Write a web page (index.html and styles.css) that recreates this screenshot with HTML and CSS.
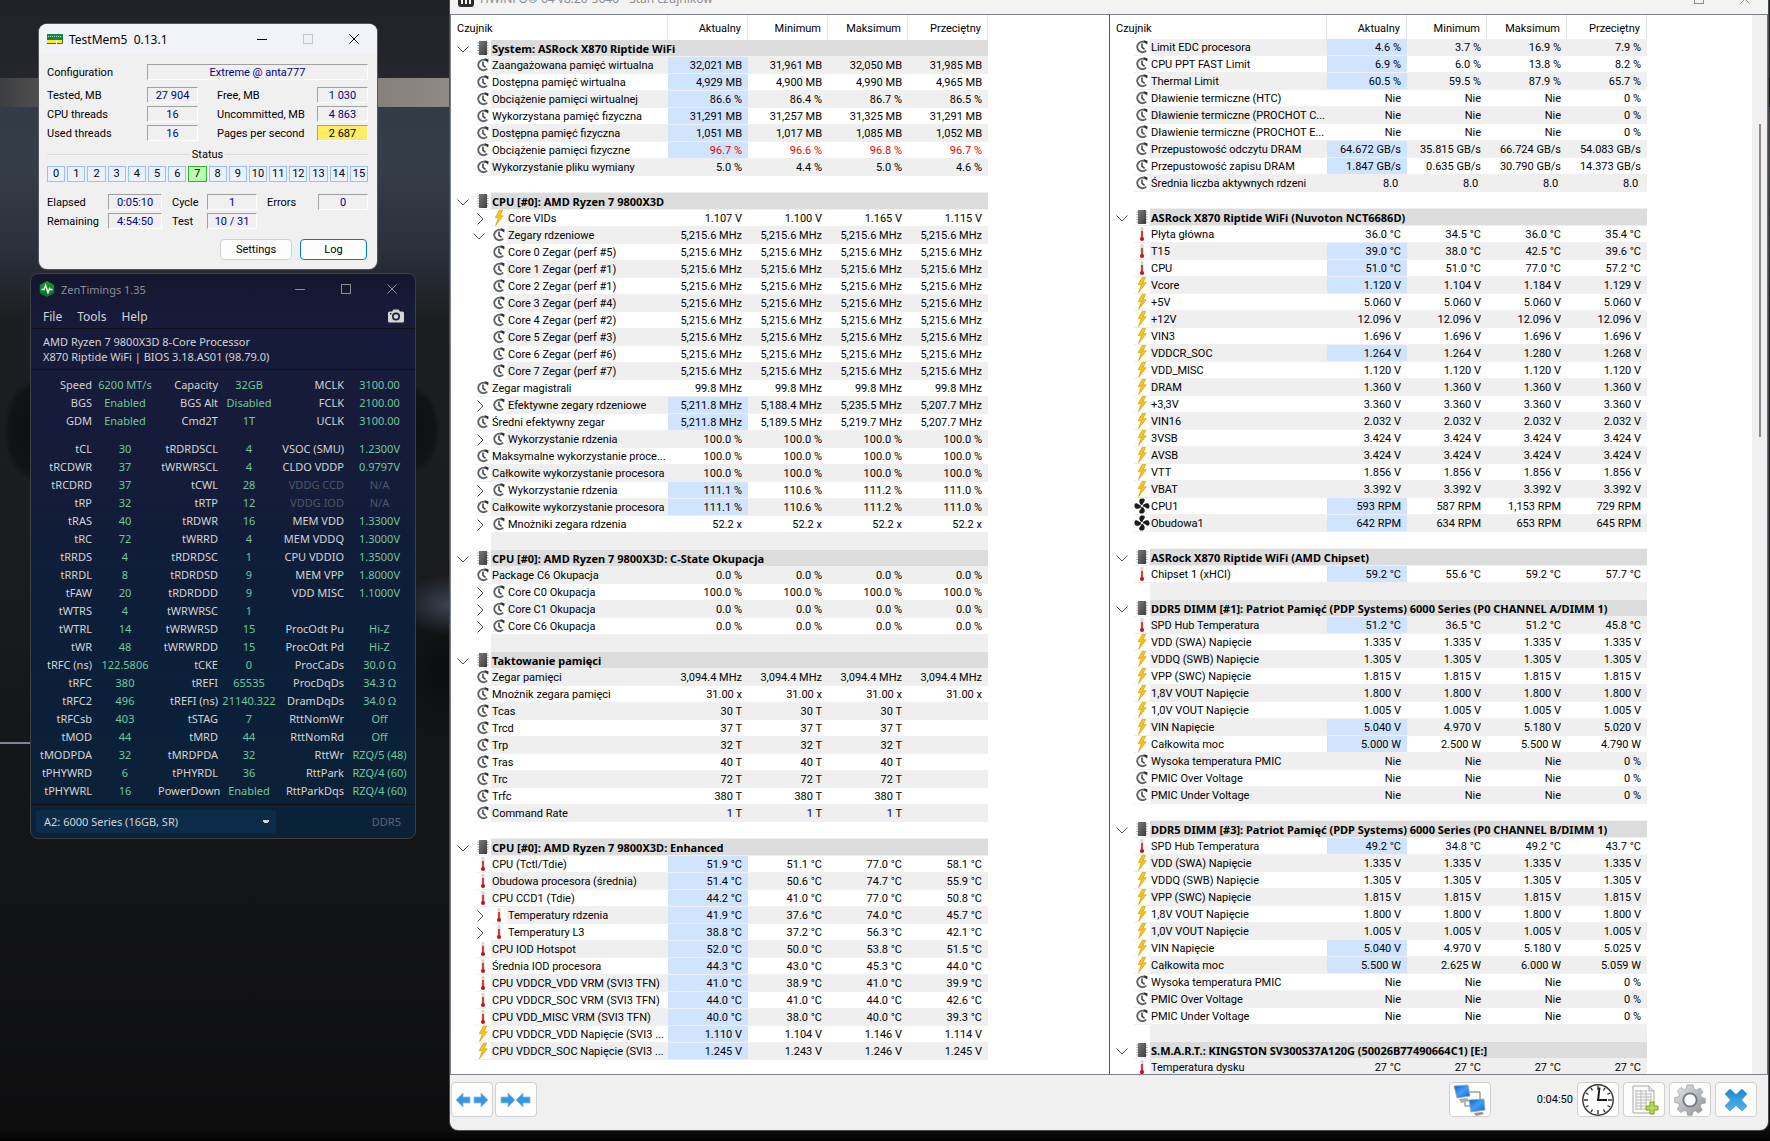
FILE: index.html
```html
<!DOCTYPE html>
<html lang="pl">
<head>
    <meta charset="UTF-8">
    <meta name="viewport" content="width=device-width, initial-scale=1.0">
    <title>Stan czujników</title>
    <link rel="stylesheet" href="styles.css">
</head>
<body>
    <!-- Icon sprite -->
    <svg class="sprite" width="0" height="0" aria-hidden="true">
        <defs>
            <linearGradient id="chip-fill" x1="0" y1="0" x2="1" y2="1">
                <stop offset="0" stop-color="#7a7a7a"/>
                <stop offset="1" stop-color="#3c3c3c"/>
            </linearGradient>
            <linearGradient id="blue-fill" x1="0" y1="0" x2="0" y2="1">
                <stop offset="0" stop-color="#1c86d1"/>
                <stop offset="1" stop-color="#56b4ee"/>
            </linearGradient>
            <linearGradient id="screen-fill" x1="0" y1="0" x2="1" y2="1">
                <stop offset="0" stop-color="#0b5fc4"/>
                <stop offset="0.5" stop-color="#3fa0f5"/>
                <stop offset="1" stop-color="#0d62c9"/>
            </linearGradient>
            <linearGradient id="gear-fill" x1="0" y1="0" x2="1" y2="1">
                <stop offset="0" stop-color="#e4e6e8"/>
                <stop offset="1" stop-color="#8f9396"/>
            </linearGradient>
            <linearGradient id="zen-fill" x1="0" y1="0" x2="0" y2="1">
                <stop offset="0" stop-color="#1f9a2c"/>
                <stop offset="1" stop-color="#0d6a35"/>
            </linearGradient>
        </defs>
        <symbol id="icon-clock" viewBox="0 0 16 16">
            <path d="M11 3.4A5.2 5.2 0 1 0 12.2 11.6" fill="none" stroke="#5f6468" stroke-width="2"/>
            <path d="M9.4 1L13.6 2.4L13.2 5.6L11 4z" fill="#2c2f31"/>
            <path d="M8 4.6V8.4L10.6 10.4" fill="none" stroke="#3c4043" stroke-width="1.5"/>
        </symbol>
        <symbol id="icon-chip" viewBox="0 0 16 16">
            <path d="M2.5 3H13.5M2.5 5.5H13.5M2.5 8H13.5M2.5 10.5H13.5M2.5 13H13.5" stroke="#9a9a9a" stroke-width="1.2"/>
            <rect x="4" y="1" width="8" height="14" fill="url(#chip-fill)"/>
        </symbol>
        <symbol id="icon-bolt" viewBox="0 0 16 16">
            <path d="M8.2 0.5L4.2 7.6H7.4L4.6 15.5L12.2 5.8H8.8L11.6 0.5z" fill="#f5c518" stroke="#d99a08" stroke-width="0.7"/>
        </symbol>
        <symbol id="icon-temp" viewBox="0 0 16 16">
            <rect x="6.5" y="1" width="3" height="12" rx="1" fill="#d6d6d6"/>
            <rect x="7.2" y="5" width="1.6" height="8" fill="#d01a1a"/>
            <circle cx="8" cy="13" r="2.1" fill="#c81414"/>
        </symbol>
        <symbol id="icon-fan" viewBox="0 0 16 16">
            <g fill="#1c1c1c">
                <path d="M7.6 7.6C6 6 4.6 4 5.6 1.8C6.6 0 10.6 0 10.8 2C11 4 8.6 4.6 8.6 7.4z"/>
                <path d="M8.4 7.6C10 6 12 4.6 14.2 5.6C16 6.6 16 10.6 14 10.8C12 11 11.4 8.6 8.6 8.6z"/>
                <path d="M8.4 8.4C10 10 11.4 12 10.4 14.2C9.4 16 5.4 16 5.2 14C5 12 7.4 11.4 7.4 8.6z"/>
                <path d="M7.6 8.4C6 10 4 11.4 1.8 10.4C0 9.4 0 5.4 2 5.2C4 5 4.6 7.4 7.4 7.4z"/>
            </g>
            <circle cx="8" cy="8" r="1.2" fill="#f0f0f0"/>
        </symbol>
        <symbol id="icon-down" viewBox="0 0 14 14">
            <path d="M1.5 4.5L7 10L12.5 4.5" fill="none" stroke="#4d4d4d"/>
        </symbol>
        <symbol id="icon-right" viewBox="0 0 14 14">
            <path d="M5.500 1.500L11 7L5.500 12.500" fill="none" stroke="#4d4d4d"/>
        </symbol>
        <symbol id="icon-min" viewBox="0 0 10 10">
            <path d="M0 5.5H10" stroke="currentColor"/>
        </symbol>
        <symbol id="icon-max" viewBox="0 0 10 10">
            <rect x="0.5" y="0.5" width="9" height="9" fill="none" stroke="currentColor"/>
        </symbol>
        <symbol id="icon-close" viewBox="0 0 10 10">
            <path d="M0.3 0.3L9.7 9.7M9.7 0.3L0.3 9.7" stroke="currentColor"/>
        </symbol>
    </svg>

    <!-- Memory test window -->
    <section class="window testmem" aria-label="TestMem5">
        <header class="titlebar testmem-title">
            <svg class="title-icon" width="16" height="10" viewBox="0 0 16 10">
                <rect width="16" height="6" fill="#0d8a4a"/>
                <path d="M1 2.5H15" stroke="#bfe3cf" stroke-dasharray="1 1"/>
                <path d="M0 6H9V9H0zM10 6H15V9H10z" fill="#f7ee1c"/>
                <path d="M15.5 6V9.5H10M0 9.5H9" stroke="#5c5c20" fill="none"/>
            </svg>
            <h1 class="title-text">TestMem5&nbsp; 0.13.1</h1>
            <div class="window-controls">
                <button class="control" aria-label="Minimize"><svg width="10" height="10"><use href="#icon-min"/></svg></button>
                <button class="control" aria-label="Maximize" disabled><svg width="10" height="10"><use href="#icon-max"/></svg></button>
                <button class="control" aria-label="Close"><svg width="10" height="10"><use href="#icon-close"/></svg></button>
            </div>
        </header>
        <div class="testmem-body">
            <div class="config-row">
                <label for="config">Configuration</label>
                <output class="field" id="config">Extreme @ anta777</output>
            </div>
            <div class="info-grid">
                <label for="tested">Tested, MB</label>
                <output class="field" id="tested">27 904</output>
                <label for="free" class="second">Free, MB</label>
                <output class="field" id="free">1 030</output>
                <label for="cpu-threads">CPU threads</label>
                <output class="field" id="cpu-threads">16</output>
                <label for="uncommitted" class="second">Uncommitted, MB</label>
                <output class="field" id="uncommitted">4 863</output>
                <label for="used-threads">Used threads</label>
                <output class="field" id="used-threads">16</output>
                <label for="pages" class="second">Pages per second</label>
                <output class="field field-warn" id="pages">2 687</output>
            </div>
            <h2 class="status-title">Status</h2>
            <ol class="threads">
                <li>0</li><li>1</li><li>2</li><li>3</li><li>4</li><li>5</li><li>6</li><li class="active">7</li>
                <li>8</li><li>9</li><li>10</li><li>11</li><li>12</li><li>13</li><li>14</li><li>15</li>
            </ol>
            <div class="progress-grid">
                <label for="elapsed">Elapsed</label>
                <output class="field" id="elapsed">0:05:10</output>
                <label for="cycle" class="near">Cycle</label>
                <output class="field" id="cycle">1</output>
                <label for="errors" class="near">Errors</label>
                <output class="field" id="errors">0</output>
                <label for="remaining">Remaining</label>
                <output class="field" id="remaining">4:54:50</output>
                <label for="test" class="near">Test</label>
                <output class="field" id="test">10 / 31</output>
            </div>
            <div class="testmem-actions">
                <button class="push settings-btn">Settings</button>
                <button class="push push-default">Log</button>
            </div>
        </div>
    </section>

    <!-- Memory timings window -->
    <section class="window zen" aria-label="ZenTimings">
        <header class="titlebar zen-title">
            <svg class="title-icon" width="16" height="16" viewBox="0 0 16 16">
                <path d="M8 0L15.2 4V12L8 16L0.8 12V4z" fill="url(#zen-fill)"/>
                <path d="M2.5 8.5H5L6.6 4.5L9 11.5L10.6 7.5L11.4 8.5H13.5" fill="none" stroke="#e8f5e8" stroke-width="1.5"/>
            </svg>
            <h1 class="title-text">ZenTimings 1.35</h1>
            <div class="window-controls">
                <button class="control" aria-label="Minimize"><svg width="10" height="10"><use href="#icon-min"/></svg></button>
                <button class="control" aria-label="Maximize"><svg width="10" height="10"><use href="#icon-max"/></svg></button>
                <button class="control" aria-label="Close"><svg width="10" height="10"><use href="#icon-close"/></svg></button>
            </div>
        </header>
        <nav class="zen-menu">
            <button>File</button>
            <button>Tools</button>
            <button>Help</button>
            <button class="camera" aria-label="Screenshot">
                <svg width="16" height="14" viewBox="0 0 16 14">
                    <path fill-rule="evenodd" d="M1.5 2.5H4L5.5 0.5H10.5L12 2.5H14.5Q16 2.5 16 4V12Q16 13.5 14.5 13.5H1.5Q0 13.5 0 12V4Q0 2.5 1.5 2.5zM8 3.6A4 4 0 1 0 8 11.6A4 4 0 1 0 8 3.6z" fill="#d4d4d4"/>
                    <circle cx="8" cy="7.6" r="2.4" fill="#d4d4d4"/>
                    <rect x="2" y="4" width="1.4" height="1.4" fill="#161a38"/>
                </svg>
            </button>
        </nav>
        <div class="zen-info">
            <p>AMD Ryzen 7 9800X3D 8-Core Processor</p>
            <p>X870 Riptide WiFi | BIOS 3.18.AS01 (98.79.0)</p>
        </div>
        <div class="zen-timings">
            <table class="timings" id="clocks" aria-label="Clocks"></table>
            <table class="timings" id="timings" aria-label="Timings"></table>
        </div>
        <footer class="zen-footer">
            <select class="module-select" aria-label="Memory module">
                <option>A2: 6000 Series (16GB, SR)</option>
            </select>
            <span class="memory-type">DDR5</span>
        </footer>
    </section>

    <!-- Sensor window -->
    <main class="window sensors" aria-label="HWiNFO">
        <header class="titlebar sensors-title">
            <svg class="title-icon" width="16" height="16" viewBox="0 0 16 16">
                <rect width="16" height="16" rx="3" fill="#2b2b2b"/>
                <path d="M4 13V8M8 13V3M12 13V5" stroke="#f5f5f5" stroke-width="2"/>
            </svg>
            <h1 class="title-text">HWiNFO® 64 v8.20-5640 - Stan czujników</h1>
            <div class="window-controls">
                <button class="control" aria-label="Minimalizuj"><svg width="10" height="10"><use href="#icon-min"/></svg></button>
                <button class="control" aria-label="Maksymalizuj"><svg width="10" height="10"><use href="#icon-max"/></svg></button>
                <button class="control" aria-label="Zamknij"><svg width="10" height="10"><use href="#icon-close"/></svg></button>
            </div>
        </header>
        <div class="panes">
            <div class="pane">
                <table class="sensor-table" id="sensors-left" aria-label="Czujniki systemu"></table>
            </div>
            <div class="pane pane-right">
                <table class="sensor-table offset" id="sensors-right" aria-label="Czujniki płyty"></table>
                <div class="scrollbar"><span class="thumb"></span></div>
            </div>
        </div>
        <footer class="toolbar">
            <div class="tool-group">
                <button class="tool" aria-label="Rozszerz">
                    <svg width="34" height="20" viewBox="0 0 34 20">
                        <path d="M1 10L8 3V7H15V13H8V17zM33 10L26 3V7H19V13H26V17z" fill="#3397e6" stroke="#9dbdd6" stroke-width="0.8"/>
                    </svg>
                </button>
                <button class="tool" aria-label="Zwiń">
                    <svg width="34" height="20" viewBox="0 0 34 20">
                        <path d="M16 10L9 3V7H2V13H9V17zM17 10L24 3V7H31V13H24V17z" fill="#3397e6" stroke="#9dbdd6" stroke-width="0.8"/>
                    </svg>
                </button>
            </div>
            <button class="tool tool-network" aria-label="Sieć">
                <svg width="34" height="32" viewBox="0 0 34 32">
                    <path d="M17 8H27V16M12 18V22H18" fill="none" stroke="#6d747a"/>
                    <path d="M6 15L14 14L17 17L8 19z" fill="#a9aeb3"/>
                    <path d="M1 2L15 1L17 12L4 14z" fill="url(#screen-fill)" stroke="#9aa4ad" stroke-width="0.8"/>
                    <path d="M21 29L29 28L31 30L23 32z" fill="#8f9499"/>
                    <path d="M16 16L31 15L32 26L18 28z" fill="url(#screen-fill)" stroke="#9aa4ad" stroke-width="0.8"/>
                </svg>
            </button>
            <time class="uptime">0:04:50</time>
            <button class="tool" aria-label="Zegar">
                <svg width="34" height="34" viewBox="0 0 34 34">
                    <circle cx="17" cy="17" r="15.2" fill="#fff" stroke="#333" stroke-width="1.4"/>
                    <g stroke="#333" stroke-width="1.4">
                        <path d="M17 3V7M17 27V31M3 17H7M27 17H31"/>
                        <path d="M10 4.900L11.500 7.500M24 4.900L22.500 7.500M4.900 10L7.500 11.500M29.100 10L26.500 11.500M4.900 24L7.500 22.500M29.100 24L26.500 22.500M10 29.100L11.500 26.500M24 29.100L22.500 26.500"/>
                    </g>
                    <path d="M17 18L18.5 4.5M16 17H26" fill="none" stroke="#1c1c1c" stroke-width="2"/>
                </svg>
            </button>
            <button class="tool" aria-label="Raport">
                <svg width="30" height="30" viewBox="0 0 30 30">
                    <path d="M4 1H20L25 6V28H4z" fill="#fafafa" stroke="#a9a9a9"/>
                    <path d="M20 1V6H25" fill="#e4e4e4" stroke="#a9a9a9"/>
                    <path d="M7 6H18M7 9H22M7 12H22M7 15H22M7 18H18M7 21H17M7 24H17M7 5V25M12 5V25M17 5V20M22 8V16" fill="none" stroke="#b9b9b9"/>
                    <path d="M21 17H25V21H29V25H25V29H21V25H17V21H21z" fill="#b4dc4c" stroke="#76a41e"/>
                </svg>
            </button>
            <button class="tool" aria-label="Ustawienia">
                <svg width="32" height="32" viewBox="0 0 32 32">
                    <path fill-rule="evenodd" d="M13 1H19L20 5.2L22.3 6.2L26 4L29 8L26.5 11.2L27.3 13.3L31.3 14.5V19L27.2 20L26.2 22.3L28.3 26L24.5 29L21.3 26.8L19.2 27.6L18.2 31.3H13.7L12.7 27.3L10.3 26.4L6.8 28.6L3.2 25L5.5 21.5L4.6 19.3L0.7 18.3V13.7L4.7 12.8L5.6 10.5L3.4 7L7 3.6L10.4 5.8L12.3 5zM16 10A6 6 0 1 0 16 22A6 6 0 1 0 16 10z" fill="url(#gear-fill)" stroke="#8b8f92" stroke-width="0.6"/>
                    <circle cx="16" cy="16" r="6.8" fill="none" stroke="#75797c" stroke-width="1.6"/>
                </svg>
            </button>
            <button class="tool" aria-label="Zamknij czujniki">
                <svg width="24" height="24" viewBox="0 0 24 24">
                    <path d="M6 1L12 6.5L18 1L23 6L17.5 12L23 18L18 23L12 17.5L6 23L1 18L6.5 12L1 6z" fill="url(#blue-fill)" stroke="#2f8fcf" stroke-width="0.6"/>
                </svg>
            </button>
        </footer>
    </main>

    <script src="script.js"></script>
</body>
</html>
```
FILE: styles.css
```css
* {
    margin: 0;
    padding: 0;
    box-sizing: border-box;
}

:root {
    --ui-font: Roboto, 'Liberation Sans', sans-serif;
    --title-font: 'Noto Sans', 'Open Sans', sans-serif;
    --row-alt: #efefef;
    --row-line: #f0f0f0;
}

body {
    position: relative;
    height: 100vh;
    overflow: hidden;
    font-family: var(--ui-font);
    font-size: 11px;
    color: #000;
    background:
        linear-gradient(#7d8593, #7d8593) 0 742px / 31px 2px no-repeat,
        linear-gradient(90deg, #3c3e41, #4b4b4c 30px, #858079 380px, #8f8a83 450px, #101113 460px) 0 78px / 100% 29px no-repeat,
        radial-gradient(ellipse 26px 50px at 30px 430px, #0e0f10, #121315 80%, transparent),
        radial-gradient(ellipse 26px 44px at 414px 430px, #0e0f10, #121315 80%, transparent),
        radial-gradient(ellipse 50px 30px at 450px 605px, #3a4453, transparent),
        radial-gradient(ellipse 60px 90px at 440px 670px, #0c0d0e, transparent),
        linear-gradient(#202227, #24262b 76px, #333b46 107px, #353d49 170px, #2b3039 250px, #1d1e21 320px, #1b1c1e 540px, #151618 750px, #131416 900px, #0e0e0f 1130px, #020202);
}

.sprite {
    position: absolute;
}

button {
    font: inherit;
    color: inherit;
    background: none;
    border: none;
}

/* Window frame */
.window {
    position: absolute;
    display: flex;
    flex-direction: column;
    border-radius: 8px;
    overflow: hidden;
}

.titlebar {
    display: flex;
    align-items: center;
    flex-shrink: 0;
    padding-left: 8px;
    font-family: var(--title-font);
}

.title-icon {
    flex-shrink: 0;
}

.title-text {
    flex: 1;
    margin-left: 6px;
    font-size: 12px;
    font-weight: 400;
    white-space: nowrap;
}

.window-controls {
    display: flex;
    align-self: stretch;
}

.control {
    display: flex;
    align-items: center;
    justify-content: center;
    width: 46px;
}

.control:disabled {
    color: #c4c4c8;
}

/* TestMem5 */
.testmem {
    top: 24px;
    left: 39px;
    width: 338px;
    background: #f0f0f0;
    box-shadow: 0 0 0 1px #54565a;
}

.testmem-title {
    height: 30px;
    background: #f2f3f9;
}

.testmem-body {
    padding: 10px 9px 9px 8px;
}

.config-row,
.info-grid,
.progress-grid {
    display: grid;
    align-items: center;
    grid-auto-rows: 16px;
    row-gap: 3px;
    white-space: nowrap;
}

.config-row {
    grid-template-columns: 100px 1fr;
    margin-bottom: 7px;
}

.info-grid {
    grid-template-columns: 100px 51px 1fr 51px;
}

.progress-grid {
    grid-template-columns: 61px 54px 45px 50px 1fr 50px;
}

.second {
    padding-left: 19px;
}

.near {
    padding-left: 10px;
}

.field {
    height: 16px;
    line-height: 15px;
    text-align: center;
    color: #00008b;
    border: 1px solid;
    border-color: #a0a0a0 #fff #fff #a0a0a0;
}

.field-warn {
    color: #000;
    background: #ffec66;
}

.status-title {
    display: flex;
    align-items: center;
    gap: 2px;
    height: 16px;
    margin: 5px 0 4px;
    font-size: 11px;
    font-weight: 400;
}

.status-title::before,
.status-title::after {
    content: '';
    flex: 1;
    border-top: 1px solid #dcdcdc;
}

.threads {
    display: flex;
    gap: 2px;
    margin-bottom: 12px;
    list-style: none;
}

.threads li {
    flex: 1;
    height: 16px;
    line-height: 14px;
    text-align: center;
    background: #ebf2ff;
    border: 1px solid #99c0fb;
}

.threads .active {
    background: #b8ffb0;
    border-color: #2db52d;
}

.testmem-actions {
    display: flex;
    justify-content: flex-end;
    gap: 8px;
    margin-top: 10px;
    padding-right: 1px;
}

.push {
    width: 67px;
    height: 21px;
    background: #fdfdfd;
    border: 1px solid #d0d0d0;
    border-radius: 4px;
}

.settings-btn {
    width: 72px;
}

.push-default {
    border-color: #0078d4;
}

/* ZenTimings */
.zen {
    top: 273px;
    left: 30px;
    width: 386px;
    color: #d4d4d4;
    font-family: var(--title-font);
    background: linear-gradient(#14162c, #171b3a 40px, #141c38 200px, #0d1f38 350px, #0a2138 480px, #0a2238);
    border: 1px solid #3d3f46;
}

.zen-title {
    height: 30px;
    color: #8d8e94;
}

.zen-title .title-text {
    font-size: 11px;
}

.zen-menu {
    display: flex;
    align-items: center;
    gap: 15px;
    height: 25px;
    padding: 0 11px 0 12px;
    font-size: 12px;
    border-bottom: 1px solid #101218;
}

.camera {
    display: flex;
    margin-left: auto;
}

.zen-info {
    padding: 5px 12px;
    line-height: 15px;
    border-bottom: 1px solid #101218;
}

.zen-timings {
    padding: 6px 0 4px;
}

.timings {
    width: 100%;
    table-layout: fixed;
    border-spacing: 0;
    white-space: nowrap;
}

.timings + .timings {
    margin-top: 10px;
}

.timings th,
.timings td {
    height: 18px;
    line-height: 18px;
}

.timings th {
    font-weight: 400;
    text-align: right;
}

.timings td {
    text-align: center;
    color: #6fc79a;
}

.timings .off {
    color: #4f5867;
}

.zen-footer {
    display: flex;
    align-items: center;
    justify-content: space-between;
    padding: 5px 14px 5px 5px;
    border-top: 1px solid #101218;
}

.module-select {
    width: 240px;
    height: 23px;
    padding: 0 8px;
    font: inherit;
    color: inherit;
    appearance: none;
    background: #0d2c49 radial-gradient(circle at 3px 0, #d4d4d4 3px, transparent 3px) right 7px center / 6px 3px no-repeat;
    border: none;
    border-radius: 2px;
}

.memory-type {
    color: #5b6472;
}

/* Sensor window */
.sensors {
    top: -17px;
    left: 450px;
    right: 2px;
    bottom: 11px;
    background: #f0f0f0;
    box-shadow: 0 0 0 1px #4a4b4f;
}

.sensors-title {
    height: 31px;
    color: #8e8e8e;
    background: #f3f3f3;
}

.panes {
    display: grid;
    grid-template-columns: 1fr 1fr;
    flex: 1;
    min-height: 0;
    background: #fff;
    border-top: 1px solid #7d828a;
    border-bottom: 1px solid #7d828a;
}

.pane {
    overflow: hidden;
    border-left: 1px solid #7d828a;
}

.pane-right {
    display: flex;
    justify-content: space-between;
    border-left-color: #55585c;
    border-right: 1px solid #6b6e72;
}

.scrollbar {
    display: grid;
    grid-template-rows: 109fr 313fr 637fr;
    justify-items: center;
    width: 15px;
    background: #f0f0f0;
}

.thumb {
    grid-row: 2;
    width: 2px;
    background: #8a8a8a;
}

.sensor-table {
    align-self: flex-start;
    width: 537px;
    table-layout: fixed;
    border-spacing: 0;
    white-space: nowrap;
}

.sensor-table thead th {
    height: 25px;
    padding: 2px 6px 0 0;
    font-weight: 400;
    text-align: right;
    border-right: 1px solid #e2e2e2;
}

.offset thead th {
    height: 24px;
}

.sensor-table thead th:first-child {
    width: 217px;
    padding-left: 6px;
    text-align: left;
}

.sensor-table tbody th {
    font-weight: 400;
    text-align: left;
}

.sensor-table tbody td {
    height: 17px;
    padding: 2px 6px 0 0;
    line-height: 14px;
    text-align: right;
    border-bottom: 1px solid var(--row-line);
}

.sensor-table:not(.offset) tbody tr:nth-child(even),
.offset tbody tr:nth-child(odd) {
    --row-bg: var(--row-alt);
}

.sensor-table tbody td,
.label {
    background: var(--row-bg, #fff);
}

.sensor-table .changed td:nth-child(2) {
    background: #d0e4ff;
}

.alert td {
    color: #f00000;
}

.name {
    display: flex;
    height: 17px;
}

.gutter {
    display: flex;
    align-items: center;
    justify-content: center;
    width: 24px;
    flex-shrink: 0;
}

.nested .gutter {
    margin-left: 16px;
}

.toggle {
    display: flex;
}

.sensor-icon {
    width: 16px;
    height: 17px;
    flex-shrink: 0;
    border-bottom: 1px solid var(--row-line);
}

.label {
    flex: 1;
    padding: 2px 0 0 1px;
    line-height: 14px;
    border-bottom: 1px solid var(--row-line);
}

.group .label {
    font-family: var(--title-font);
    font-weight: 700;
    background: #dcdcdc;
}

.blank .label {
    margin-left: 16px;
}

/* Toolbar */
.toolbar {
    display: flex;
    gap: 4px;
    flex-shrink: 0;
    height: 55px;
    padding: 7px 11px 0 1px;
}

.tool-group {
    display: flex;
    gap: 2px;
}

.tool {
    display: flex;
    align-items: center;
    justify-content: center;
    width: 42px;
    height: 35px;
    background: #fdfdfd;
    border: 1px solid #d0d0d0;
    border-radius: 4px;
}

.tool-network {
    margin-left: auto;
}

.uptime {
    align-self: flex-start;
    margin-left: 42px;
    line-height: 35px;
}
```
FILE: script.js
```js
// Each line: icon | name | current | minimum | maximum | average | flags
// flags: c = value changed, r = alert, n = nested, > = collapsed node, v = expanded node
const leftSensors = `
#|System: ASRock X870 Riptide WiFi
clock|Zaangażowana pamięć wirtualna|32,021 MB|31,961 MB|32,050 MB|31,985 MB|c
clock|Dostępna pamięć wirtualna|4,929 MB|4,900 MB|4,990 MB|4,965 MB|c
clock|Obciążenie pamięci wirtualnej|86.6 %|86.4 %|86.7 %|86.5 %|c
clock|Wykorzystana pamięć fizyczna|31,291 MB|31,257 MB|31,325 MB|31,291 MB|c
clock|Dostępna pamięć fizyczna|1,051 MB|1,017 MB|1,085 MB|1,052 MB|c
clock|Obciążenie pamięci fizyczne|96.7 %|96.6 %|96.8 %|96.7 %|cr
clock|Wykorzystanie pliku wymiany|5.0 %|4.4 %|5.0 %|4.6 %
-
#|CPU [#0]: AMD Ryzen 7 9800X3D
bolt|Core VIDs|1.107 V|1.100 V|1.165 V|1.115 V|n>
clock|Zegary rdzeniowe|5,215.6 MHz|5,215.6 MHz|5,215.6 MHz|5,215.6 MHz|nv
clock|Core 0 Zegar (perf #5)|5,215.6 MHz|5,215.6 MHz|5,215.6 MHz|5,215.6 MHz|n
clock|Core 1 Zegar (perf #1)|5,215.6 MHz|5,215.6 MHz|5,215.6 MHz|5,215.6 MHz|n
clock|Core 2 Zegar (perf #1)|5,215.6 MHz|5,215.6 MHz|5,215.6 MHz|5,215.6 MHz|n
clock|Core 3 Zegar (perf #4)|5,215.6 MHz|5,215.6 MHz|5,215.6 MHz|5,215.6 MHz|n
clock|Core 4 Zegar (perf #2)|5,215.6 MHz|5,215.6 MHz|5,215.6 MHz|5,215.6 MHz|n
clock|Core 5 Zegar (perf #3)|5,215.6 MHz|5,215.6 MHz|5,215.6 MHz|5,215.6 MHz|n
clock|Core 6 Zegar (perf #6)|5,215.6 MHz|5,215.6 MHz|5,215.6 MHz|5,215.6 MHz|n
clock|Core 7 Zegar (perf #7)|5,215.6 MHz|5,215.6 MHz|5,215.6 MHz|5,215.6 MHz|n
clock|Zegar magistrali|99.8 MHz|99.8 MHz|99.8 MHz|99.8 MHz
clock|Efektywne zegary rdzeniowe|5,211.8 MHz|5,188.4 MHz|5,235.5 MHz|5,207.7 MHz|cn>
clock|Średni efektywny zegar|5,211.8 MHz|5,189.5 MHz|5,219.7 MHz|5,207.7 MHz|c
clock|Wykorzystanie rdzenia|100.0 %|100.0 %|100.0 %|100.0 %|n>
clock|Maksymalne wykorzystanie proce...|100.0 %|100.0 %|100.0 %|100.0 %
clock|Całkowite wykorzystanie procesora|100.0 %|100.0 %|100.0 %|100.0 %
clock|Wykorzystanie rdzenia|111.1 %|110.6 %|111.2 %|111.0 %|cn>
clock|Całkowite wykorzystanie procesora|111.1 %|110.6 %|111.2 %|111.0 %|c
clock|Mnożniki zegara rdzenia|52.2 x|52.2 x|52.2 x|52.2 x|n>
-
#|CPU [#0]: AMD Ryzen 7 9800X3D: C-State Okupacja
clock|Package C6 Okupacja|0.0 %|0.0 %|0.0 %|0.0 %
clock|Core C0 Okupacja|100.0 %|100.0 %|100.0 %|100.0 %|n>
clock|Core C1 Okupacja|0.0 %|0.0 %|0.0 %|0.0 %|n>
clock|Core C6 Okupacja|0.0 %|0.0 %|0.0 %|0.0 %|n>
-
#|Taktowanie pamięci
clock|Zegar pamięci|3,094.4 MHz|3,094.4 MHz|3,094.4 MHz|3,094.4 MHz
clock|Mnożnik zegara pamięci|31.00 x|31.00 x|31.00 x|31.00 x
clock|Tcas|30 T|30 T|30 T|
clock|Trcd|37 T|37 T|37 T|
clock|Trp|32 T|32 T|32 T|
clock|Tras|40 T|40 T|40 T|
clock|Trc|72 T|72 T|72 T|
clock|Trfc|380 T|380 T|380 T|
clock|Command Rate|1 T|1 T|1 T|
-
#|CPU [#0]: AMD Ryzen 7 9800X3D: Enhanced
temp|CPU (Tctl/Tdie)|51.9 °C|51.1 °C|77.0 °C|58.1 °C|c
temp|Obudowa procesora (średnia)|51.4 °C|50.6 °C|74.7 °C|55.9 °C|c
temp|CPU CCD1 (Tdie)|44.2 °C|41.0 °C|77.0 °C|50.8 °C|c
temp|Temperatury rdzenia|41.9 °C|37.6 °C|74.0 °C|45.7 °C|cn>
temp|Temperatury L3|38.8 °C|37.2 °C|56.3 °C|42.1 °C|cn>
temp|CPU IOD Hotspot|52.0 °C|50.0 °C|53.8 °C|51.5 °C|c
temp|Średnia IOD procesora|44.3 °C|43.0 °C|45.3 °C|44.0 °C|c
temp|CPU VDDCR_VDD VRM (SVI3 TFN)|41.0 °C|38.9 °C|41.0 °C|39.9 °C|c
temp|CPU VDDCR_SOC VRM (SVI3 TFN)|44.0 °C|41.0 °C|44.0 °C|42.6 °C|c
temp|CPU VDD_MISC VRM (SVI3 TFN)|40.0 °C|38.0 °C|40.0 °C|39.3 °C|c
bolt|CPU VDDCR_VDD Napięcie (SVI3 ...|1.110 V|1.104 V|1.146 V|1.114 V|c
bolt|CPU VDDCR_SOC Napięcie (SVI3 ...|1.245 V|1.243 V|1.246 V|1.245 V|c
`;

const rightSensors = `
clock|Limit EDC procesora|4.6 %|3.7 %|16.9 %|7.9 %|c
clock|CPU PPT FAST Limit|6.9 %|6.0 %|13.8 %|8.2 %|c
clock|Thermal Limit|60.5 %|59.5 %|87.9 %|65.7 %|c
clock|Dławienie termiczne (HTC)|Nie|Nie|Nie|0 %
clock|Dławienie termiczne (PROCHOT C...|Nie|Nie|Nie|0 %
clock|Dławienie termiczne (PROCHOT E...|Nie|Nie|Nie|0 %
clock|Przepustowość odczytu DRAM|64.672 GB/s|35.815 GB/s|66.724 GB/s|54.083 GB/s|c
clock|Przepustowość zapisu DRAM|1.847 GB/s|0.635 GB/s|30.790 GB/s|14.373 GB/s|c
clock|Średnia liczba aktywnych rdzeni|8.0&nbsp;|8.0&nbsp;|8.0&nbsp;|8.0&nbsp;
-
#|ASRock X870 Riptide WiFi (Nuvoton NCT6686D)
temp|Płyta główna|36.0 °C|34.5 °C|36.0 °C|35.4 °C
temp|T15|39.0 °C|38.0 °C|42.5 °C|39.6 °C|c
temp|CPU|51.0 °C|51.0 °C|77.0 °C|57.2 °C|c
bolt|Vcore|1.120 V|1.104 V|1.184 V|1.129 V|c
bolt|+5V|5.060 V|5.060 V|5.060 V|5.060 V
bolt|+12V|12.096 V|12.096 V|12.096 V|12.096 V
bolt|VIN3|1.696 V|1.696 V|1.696 V|1.696 V
bolt|VDDCR_SOC|1.264 V|1.264 V|1.280 V|1.268 V|c
bolt|VDD_MISC|1.120 V|1.120 V|1.120 V|1.120 V
bolt|DRAM|1.360 V|1.360 V|1.360 V|1.360 V
bolt|+3,3V|3.360 V|3.360 V|3.360 V|3.360 V
bolt|VIN16|2.032 V|2.032 V|2.032 V|2.032 V
bolt|3VSB|3.424 V|3.424 V|3.424 V|3.424 V
bolt|AVSB|3.424 V|3.424 V|3.424 V|3.424 V
bolt|VTT|1.856 V|1.856 V|1.856 V|1.856 V
bolt|VBAT|3.392 V|3.392 V|3.392 V|3.392 V
fan|CPU1|593 RPM|587 RPM|1,153 RPM|729 RPM|c
fan|Obudowa1|642 RPM|634 RPM|653 RPM|645 RPM|c
-
#|ASRock X870 Riptide WiFi (AMD Chipset)
temp|Chipset 1 (xHCI)|59.2 °C|55.6 °C|59.2 °C|57.7 °C|c
-
#|DDR5 DIMM [#1]: Patriot Pamięć (PDP Systems) 6000 Series (P0 CHANNEL A/DIMM 1)
temp|SPD Hub Temperatura|51.2 °C|36.5 °C|51.2 °C|45.8 °C|c
bolt|VDD (SWA) Napięcie|1.335 V|1.335 V|1.335 V|1.335 V
bolt|VDDQ (SWB) Napięcie|1.305 V|1.305 V|1.305 V|1.305 V
bolt|VPP (SWC) Napięcie|1.815 V|1.815 V|1.815 V|1.815 V
bolt|1,8V VOUT Napięcie|1.800 V|1.800 V|1.800 V|1.800 V
bolt|1,0V VOUT Napięcie|1.005 V|1.005 V|1.005 V|1.005 V
bolt|VIN Napięcie|5.040 V|4.970 V|5.180 V|5.020 V|c
bolt|Całkowita moc|5.000 W|2.500 W|5.500 W|4.790 W|c
clock|Wysoka temperatura PMIC|Nie|Nie|Nie|0 %
clock|PMIC Over Voltage|Nie|Nie|Nie|0 %
clock|PMIC Under Voltage|Nie|Nie|Nie|0 %
-
#|DDR5 DIMM [#3]: Patriot Pamięć (PDP Systems) 6000 Series (P0 CHANNEL B/DIMM 1)
temp|SPD Hub Temperatura|49.2 °C|34.8 °C|49.2 °C|43.7 °C|c
bolt|VDD (SWA) Napięcie|1.335 V|1.335 V|1.335 V|1.335 V
bolt|VDDQ (SWB) Napięcie|1.305 V|1.305 V|1.305 V|1.305 V
bolt|VPP (SWC) Napięcie|1.815 V|1.815 V|1.815 V|1.815 V
bolt|1,8V VOUT Napięcie|1.800 V|1.800 V|1.800 V|1.800 V
bolt|1,0V VOUT Napięcie|1.005 V|1.005 V|1.005 V|1.005 V
bolt|VIN Napięcie|5.040 V|4.970 V|5.180 V|5.025 V|c
bolt|Całkowita moc|5.500 W|2.625 W|6.000 W|5.059 W|c
clock|Wysoka temperatura PMIC|Nie|Nie|Nie|0 %
clock|PMIC Over Voltage|Nie|Nie|Nie|0 %
clock|PMIC Under Voltage|Nie|Nie|Nie|0 %
-
#|S.M.A.R.T.: KINGSTON SV300S37A120G (50026B77490664C1) [E:]
temp|Temperatura dysku|27 °C|27 °C|27 °C|27 °C
`;

const clocks = `
Speed|6200 MT/s|Capacity|32GB|MCLK|3100.00
BGS|Enabled|BGS Alt|Disabled|FCLK|2100.00
GDM|Enabled|Cmd2T|1T|UCLK|3100.00
`;

const timings = `
tCL|30|tRDRDSCL|4|VSOC (SMU)|1.2300V
tRCDWR|37|tWRWRSCL|4|CLDO VDDP|0.9797V
tRCDRD|37|tCWL|28|VDDG CCD|N/A
tRP|32|tRTP|12|VDDG IOD|N/A
tRAS|40|tRDWR|16|MEM VDD|1.3300V
tRC|72|tWRRD|4|MEM VDDQ|1.3000V
tRRDS|4|tRDRDSC|1|CPU VDDIO|1.3500V
tRRDL|8|tRDRDSD|9|MEM VPP|1.8000V
tFAW|20|tRDRDDD|9|VDD MISC|1.1000V
tWTRS|4|tWRWRSC|1||
tWTRL|14|tWRWRSD|15|ProcOdt Pu|Hi-Z
tWR|48|tWRWRDD|15|ProcOdt Pd|Hi-Z
tRFC (ns)|122.5806|tCKE|0|ProcCaDs|30.0 Ω
tRFC|380|tREFI|65535|ProcDqDs|34.3 Ω
tRFC2|496|tREFI (ns)|21140.322|DramDqDs|34.0 Ω
tRFCsb|403|tSTAG|7|RttNomWr|Off
tMOD|44|tMRD|44|RttNomRd|Off
tMODPDA|32|tMRDPDA|32|RttWr|RZQ/5 (48)
tPHYWRD|6|tPHYRDL|36|RttPark|RZQ/4 (60)
tPHYWRL|16|PowerDown|Enabled|RttParkDqs|RZQ/4 (60)
`;

const lines = (text) => text.trim().split('\n').map((line) => line.split('|'));

function toggle(dir, name) {
    return `<button class="toggle" aria-label="${name}"><svg width="14" height="14"><use href="#icon-${dir}"/></svg></button>`;
}

function icon(id) {
    return `<svg class="sensor-icon" viewBox="0 0 16 16"><use href="#icon-${id}" width="16" height="16"/></svg>`;
}

function sensorRow([id, name, now, min, max, avg, flags = '']) {
    if (id === '-') {
        return '<tr class="blank"><th><div class="name"><span class="gutter"></span><span class="label"></span></div></th><td colspan="4"></td></tr>';
    }
    if (id === '#') {
        return `<tr class="group"><th colspan="5" scope="rowgroup"><div class="name"><span class="gutter">${toggle('down', name)}</span>${icon('chip')}<span class="label">${name}</span></div></th></tr>`;
    }

    const classes = [];
    if (flags.includes('c')) classes.push('changed');
    if (flags.includes('r')) classes.push('alert');
    if (flags.includes('n')) classes.push('nested');

    let arrow = '';
    if (flags.includes('>')) arrow = toggle('right', name);
    if (flags.includes('v')) arrow = toggle('down', name);

    const cells = [now, min, max, avg].map((value) => `<td>${value}</td>`).join('');
    return `<tr class="${classes.join(' ')}"><th scope="row"><div class="name"><span class="gutter">${arrow}</span>${icon(id)}<span class="label">${name}</span></div></th>${cells}</tr>`;
}

function renderSensors(tableId, data) {
    const head = ['Czujnik', 'Aktualny', 'Minimum', 'Maksimum', 'Przeciętny']
        .map((title) => `<th scope="col">${title}</th>`).join('');
    document.getElementById(tableId).innerHTML =
        `<thead><tr>${head}</tr></thead><tbody>${lines(data).map(sensorRow).join('')}</tbody>`;
}

function renderTimings(tableId, data) {
    const widths = [61, 66, 60, 62, 64, 71];
    const cols = widths.map((width) => `<col width="${width}">`).join('');
    const rows = lines(data).map((cells) => {
        const row = cells.map((cell, i) => {
            const off = i > 3 && cells[5] === 'N/A' ? ' class="off"' : '';
            return i % 2 ? `<td${off}>${cell}</td>` : `<th scope="row"${off}>${cell}</th>`;
        });
        return `<tr>${row.join('')}</tr>`;
    });
    document.getElementById(tableId).innerHTML = `<colgroup>${cols}</colgroup><tbody>${rows.join('')}</tbody>`;
}

renderSensors('sensors-left', leftSensors);
renderSensors('sensors-right', rightSensors);
renderTimings('clocks', clocks);
renderTimings('timings', timings);
```
